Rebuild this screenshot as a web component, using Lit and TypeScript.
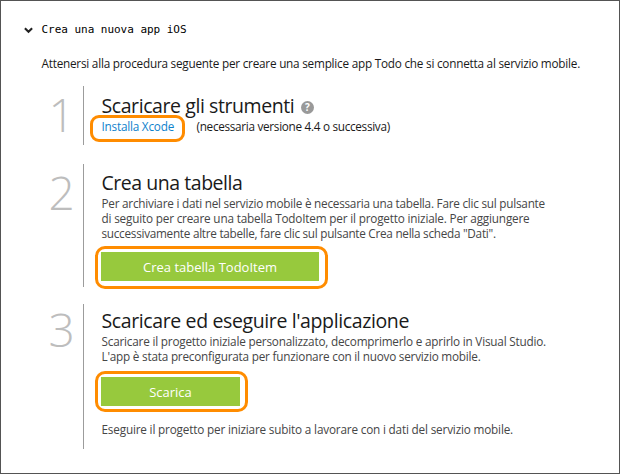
import { LitElement, html, css, svg } from "lit";
import { customElement } from "lit/decorators.js";

const chevron = svg`<svg class="chevron" width="9" height="7" viewBox="0 0 9 7"><path d="M.9 1.2 4.5 4.7 8.1 1.2" fill="none" stroke="#222" stroke-width="2.1"/></svg>`;

@customElement("app-root")
export class AppRoot extends LitElement {
  static styles = css`
    :host {
      display: block;
      box-sizing: border-box;
      width: 620px;
      height: 474px;
      border: 1px solid #545454;
      background: #fff;
      color: #1a1a1a;
      font: 11.75px/15px "Open Sans", "Noto Sans", sans-serif;
      white-space: nowrap;
      overflow: hidden;
    }
    h1, h2, p { margin: 0; font-weight: 400; }
    .title {
      display: flex;
      align-items: center;
      gap: 9px;
      margin: 21px 0 0 22.5px;
      height: 15px;
      font: 11px/15px "DejaVu Sans Mono", monospace;
      letter-spacing: -0.03px;
      color: #000;
    }
    .title h1 { font: inherit; }
    .chevron { flex: none; margin-top: 1px; }
    .intro { margin: 19px 0 0 40.5px; letter-spacing: -0.226px; }
    .step {
      display: grid;
      grid-template-columns: 82px 1fr;
      box-sizing: border-box;
    }
    .one { height: 59px; margin-top: 15px; }
    .two { height: 123px; margin-top: 19px; }
    .three { height: 145px; margin-top: 17px; }
    .num {
      padding-left: 47.5px;
      font-size: 46px;
      line-height: 56px;
      font-weight: 300;
      color: #bdbdbd;
    }
    .body { border-left: 1px solid #9c9c9c; padding-left: 17.5px; }
    .one .body { padding-top: 6px; }
    .two .body { padding-top: 5px; }
    .three .body { padding-top: 3px; }
    .three .num { margin-top: -3px; }
    h2 {
      display: flex;
      align-items: center;
      gap: 8px;
      height: 27px;
      font-size: 19.5px;
      line-height: 27px;
    }
    .text { color: #464646; }
    .t1 { letter-spacing: -0.42px; }
    .t2 { letter-spacing: -0.46px; }
    .t3 { letter-spacing: -0.38px; }
    .help { margin: 3px 0 0 -1px; }
    .help text { font: 700 10px "Open Sans", sans-serif; fill: #fff; }
    .row { display: flex; gap: 22.5px; }
    .link { position: relative; color: #0e82cc; letter-spacing: -0.22px; }
    .link::after {
      content: "";
      position: absolute;
      inset: -4px -11px -8px -11.5px;
      border: 3px solid #ff8c00;
      border-radius: 9px;
    }
    .need { letter-spacing: -0.3px; }
    .a { letter-spacing: -0.238px; }
    .b { letter-spacing: -0.184px; }
    .c { letter-spacing: -0.272px; line-height: 14px; }
    .d { letter-spacing: -0.2045px; }
    .e { letter-spacing: -0.216px; }
    .f { letter-spacing: -0.18px; margin-top: 16px; }
    .btn {
      position: relative;
      display: block;
      box-sizing: border-box;
      height: 29px;
      margin: 12px 0 0 -0.5px;
      padding: 1px 0 0;
      border: 0;
      background: #97c93d;
      color: #fff;
      font: 13px/28px "Open Sans", "Noto Sans", sans-serif;
      text-align: center;
    }
    .btn::after {
      content: "";
      position: absolute;
      inset: -6px -9px -8px -6px;
      border: 3px solid #ff8c00;
      border-radius: 10px;
    }
    .create { width: 218px; }
    .download { width: 139px; margin-top: 13px; }
    .download::after { inset: -6px -8px -6px -6px; }
  `;

  render() {
    return html`
      <header class="title">${chevron}<h1>Crea una nuova app iOS</h1></header>
      <p class="intro">Attenersi alla procedura seguente per creare una semplice app Todo che si connetta al servizio mobile.</p>

      <section class="step one">
        <div class="num">1</div>
        <div class="body">
          <h2>
            <span class="t1">Scaricare gli strumenti</span>
            <svg class="help" width="13" height="13" viewBox="0 0 13 13">
              <circle cx="6.5" cy="6.5" r="6.5" fill="#999" />
              <text x="6.5" y="10.1" text-anchor="middle">?</text>
            </svg>
          </h2>
          <div class="row">
            <a class="link">Installa Xcode</a>
            <span class="need">(necessaria versione 4.4 o successiva)</span>
          </div>
        </div>
      </section>

      <section class="step two">
        <div class="num">2</div>
        <div class="body">
          <h2><span class="t2">Crea una tabella</span></h2>
          <p class="text a">Per archiviare i dati nel servizio mobile è necessaria una tabella. Fare clic sul pulsante</p>
          <p class="text b">di seguito per creare una tabella TodoItem per il progetto iniziale. Per aggiungere</p>
          <p class="text c">successivamente altre tabelle, fare clic sul pulsante Crea nella scheda "Dati".</p>
          <button class="btn create">Crea tabella TodoItem</button>
        </div>
      </section>

      <section class="step three">
        <div class="num">3</div>
        <div class="body">
          <h2><span class="t3">Scaricare ed eseguire l'applicazione</span></h2>
          <p class="text d">Scaricare il progetto iniziale personalizzato, decomprimerlo e aprirlo in Visual Studio.</p>
          <p class="text e">L'app è stata preconfigurata per funzionare con il nuovo servizio mobile.</p>
          <button class="btn download">Scarica</button>
          <p class="text f">Eseguire il progetto per iniziare subito a lavorare con i dati del servizio mobile.</p>
        </div>
      </section>
    `;
  }
}
